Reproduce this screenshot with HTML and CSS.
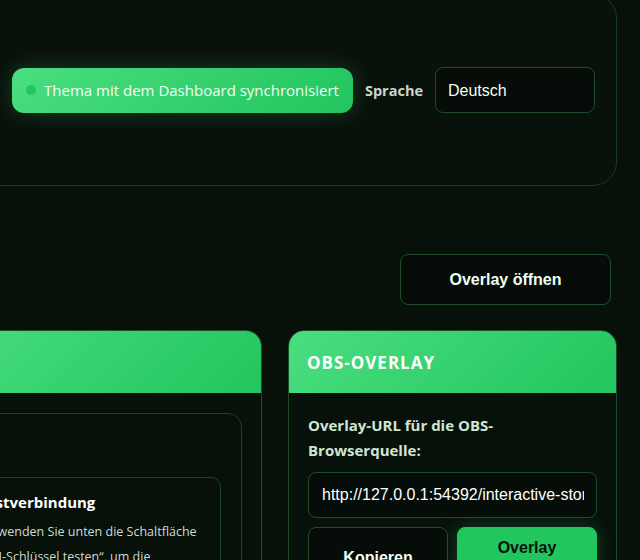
FILE: index.html
```html
<!DOCTYPE html>
<html lang="de">
<head>
  <meta charset="UTF-8">
  <meta name="viewport" content="width=device-width, initial-scale=1.0">
  <title>Overlay Einstellungen</title>
  <link rel="stylesheet" href="styles.css">
</head>
<body>
  <div class="page">
    <section class="settings-panel">
      <div class="settings-row">
        <div class="sync-badge"><span class="dot"></span>Thema mit dem Dashboard synchronisiert</div>
        <label class="lang-label" for="lang">Sprache</label>
        <select id="lang" class="lang-select">
          <option>Deutsch</option>
          <option>English</option>
        </select>
      </div>
    </section>

    <div class="toolbar">
      <button class="btn btn-outline">Overlay öffnen</button>
    </div>

    <div class="cards">
      <section class="card">
        <div class="card-head">API</div>
        <div class="card-body">
          <div class="panel-box">
            <div class="test-box">
              <h3 class="test-title">Testverbindung</h3>
              <p class="test-text">Verwenden Sie unten die Schaltfläche „API-Schlüssel testen“, um die Verbindung zu prüfen.</p>
            </div>
          </div>
        </div>
      </section>

      <section class="card">
        <div class="card-head">OBS-Overlay</div>
        <div class="card-body">
          <label class="field-label" for="overlay-url">Overlay-URL für die OBS-Browserquelle:</label>
          <input id="overlay-url" class="url-input" type="text" value="http://127.0.0.1:54392/interactive-story/overlay" readonly>
          <div class="actions">
            <button class="btn btn-outline">Kopieren</button>
            <button class="btn btn-primary">Overlay öffnen</button>
          </div>
        </div>
      </section>
    </div>
  </div>
</body>
</html>
```

FILE: styles.css
```css
* { box-sizing: border-box; }
html, body { overflow: hidden; }
body { margin: 0; background: #08100a; font-family: "Open Sans", "Noto Sans", sans-serif; color: #e6f4ea; }

.page { width: 697px; margin-left: -80px; }

.settings-panel { margin-top: -6px; padding: 72px 21px; background: #09110b; border: 1px solid #173a20; border-radius: 24px; }
.settings-row { display: flex; justify-content: flex-end; align-items: center; gap: 12px; }
.sync-badge { display: flex; align-items: center; gap: 8px; height: 45px; padding: 0 14px; border-radius: 12px; background: linear-gradient(135deg, #4ade80, #22c55e); color: #f2fff5; font-size: 15px; box-shadow: 0 0 22px rgba(74, 222, 128, 0.22); }
.dot { width: 10px; height: 10px; border-radius: 50%; background: #22c55e; }
.lang-label { font-size: 14.5px; font-weight: 700; color: #c9d6cc; }
.lang-select { width: 160px; height: 46px; padding: 0 12px; appearance: none; -webkit-appearance: none; background: #060c07; border: 1px solid #1f4d2a; border-radius: 8px; color: #f2fff5; font: 16px "Liberation Sans", Arial, sans-serif; }

.toolbar { display: flex; justify-content: flex-end; margin: 68px 6px 25px 0; }
.btn { font: 700 16px/1.2 "Liberation Sans", Arial, sans-serif; border-radius: 8px; cursor: pointer; }
.btn-outline { background: #060c07; border: 1px solid #1f4d2a; color: #f0fff3; }
.btn-primary { background: #22c55e; border: 1px solid #22c55e; color: #04130a; box-shadow: 0 0 18px rgba(34, 197, 94, 0.3); }
.toolbar .btn { width: 211px; height: 51px; }

.cards { display: grid; grid-template-columns: 342px 329px; gap: 26px; align-items: start; }
.card { background: #08100a; border: 1px solid #1f4d2a; border-radius: 16px; overflow: hidden; }
.card-head { display: flex; align-items: center; height: 62px; padding: 0 18px; background: linear-gradient(135deg, #4ade80, #22c55e); color: #fff; font-size: 17px; font-weight: 700; letter-spacing: 1px; text-transform: uppercase; }
.card-body { padding: 20px 19px; }

.panel-box { padding: 63px 20px 20px; border: 1px solid #1c4424; border-radius: 14px; }
.test-box { padding: 13px 16px 16px; border: 1px solid #1c4424; border-radius: 10px; }
.test-title { margin: 0 0 6px; font-size: 15px; line-height: 22px; font-weight: 700; color: #fff; }
.test-text { margin: 0; font-size: 12.5px; line-height: 25px; color: #cddcd1; }

.field-label { display: block; margin-bottom: 9px; font-size: 15px; line-height: 25px; font-weight: 700; color: #cfe6d4; }
.url-input { width: 100%; height: 46px; padding: 0 12px 0 13px; background: #060c07; border: 1px solid #1f4d2a; border-radius: 8px; color: #fff; font: 16px "Liberation Sans", Arial, sans-serif; }
.actions { display: grid; grid-template-columns: 1fr 1fr; gap: 9px; margin-top: 9px; }
.actions .btn { padding: 10px 16px; }
```
